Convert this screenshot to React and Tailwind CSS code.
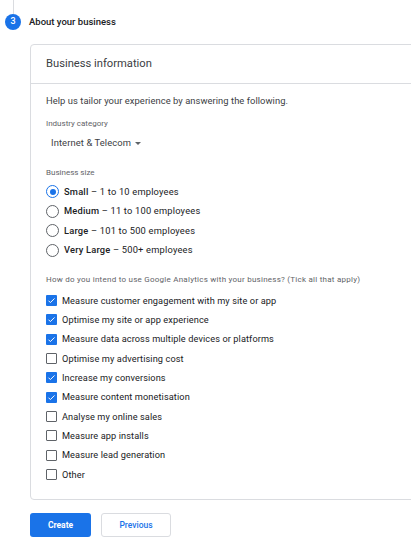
const sizes = [
  { name: "Small", desc: "1 to 10 employees", on: true },
  { name: "Medium", desc: "11 to 100 employees" },
  { name: "Large", desc: "101 to 500 employees" },
  { name: "Very Large", desc: "500+ employees" },
];

const uses = [
  { label: "Measure customer engagement with my site or app", on: true },
  { label: "Optimise my site or app experience", on: true },
  { label: "Measure data across multiple devices or platforms", on: true },
  { label: "Optimise my advertising cost" },
  { label: "Increase my conversions", on: true },
  { label: "Measure content monetisation", on: true },
  { label: "Analyse my online sales" },
  { label: "Measure app installs" },
  { label: "Measure lead generation" },
  { label: "Other" },
];

function Radio({ on }) {
  return (
    <span
      className={
        "w-[13px] h-[13px] rounded-full border-[1.5px] flex items-center justify-center shrink-0 " +
        (on ? "border-[#1a73e8]" : "border-[#5f6368]")
      }
    >
      {on && <span className="w-[6px] h-[6px] rounded-full bg-[#1a73e8]" />}
    </span>
  );
}

function Checkbox({ on }) {
  if (on) {
    return (
      <span className="w-[11px] h-[11px] rounded-[1px] bg-[#1a73e8] flex items-center justify-center shrink-0">
        <svg width="9" height="9" viewBox="0 0 24 24">
          <path d="M4 12.5l5 5L20 6.5" fill="none" stroke="#fff" strokeWidth="2.6" />
        </svg>
      </span>
    );
  }
  return <span className="w-[11px] h-[11px] rounded-[1px] border-[1.5px] border-[#5f6368] shrink-0" />;
}

export default function App() {
  return (
    <div className="w-[411px] h-[544px] overflow-hidden bg-white text-[#3c4043] font-['Roboto',sans-serif]">
      {/* step header */}
      <div className="relative h-[44px]">
        <div className="absolute left-[13px] top-0 w-px h-[14px] bg-[#dadce0]" />
        <div className="flex items-center pt-[14px] pl-[5px]">
          <span className="w-[16px] h-[16px] rounded-full bg-[#1a73e8] text-white text-[9px] font-medium flex items-center justify-center">
            3
          </span>
          <span className="ml-[8px] text-[9.5px] font-medium text-[#202124]">About your business</span>
        </div>
      </div>

      <div className="ml-[30px] w-[400px] border border-[#dadce0] rounded-[4px]">
        <div className="h-[39px] flex items-center pl-[15px] pt-[1px] border-b border-[#dadce0] text-[11.2px] text-[#3c4043]">
          Business information
        </div>

        <div className="pl-[15px] pt-[10px] pb-[15px]">
          <div className="h-[14px] leading-[14px] text-[9.4px] tracking-[0.05px]">
            Help us tailor your experience by answering the following.
          </div>

          <div className="mt-[10px] h-[12px] leading-[12px] text-[8px] text-[#5f6368]">Industry category</div>
          <div className="mt-[6px] h-[14px] flex items-center pl-[5px] text-[9.4px] tracking-[0.1px]">
            Internet &amp; Telecom
            <span className="ml-[4px] w-0 h-0 border-l-[3px] border-r-[3px] border-t-[3px] border-l-transparent border-r-transparent border-t-[#5f6368]" />
          </div>

          <div className="mt-[17px] h-[12px] leading-[12px] text-[8px] text-[#5f6368]">Business size</div>
          <div className="mt-[3px] flex flex-col">
            {sizes.map((s) => (
              <div key={s.name} className="h-[19.5px] flex items-center">
                <Radio on={s.on} />
                <span className="ml-[5px] text-[9.3px] tracking-[0.2px] text-[#202124]">
                  <span className="font-medium">{s.name}</span> – {s.desc}
                </span>
              </div>
            ))}
          </div>

          <div className="mt-[14px] h-[12px] leading-[12px] text-[8px] text-[#5f6368] tracking-[0.25px]">
            How do you intend to use Google Analytics with your business? (Tick all that apply)
          </div>
          <div className="mt-[5px] flex flex-col">
            {uses.map((u) => (
              <div key={u.label} className="h-[19.33px] flex items-center">
                <Checkbox on={u.on} />
                <span className="ml-[5px] text-[9.2px] tracking-[0.1px] text-[#202124]">{u.label}</span>
              </div>
            ))}
          </div>
        </div>
      </div>

      <div className="ml-[30px] mt-[13px] flex gap-[10px]">
        <button className="w-[61px] h-[24px] rounded-[3px] bg-[#1a73e8] text-white text-[8.5px] font-bold">
          Create
        </button>
        <button className="w-[70px] h-[24px] rounded-[3px] border border-[#dadce0] bg-white text-[#1a73e8] text-[8.5px] font-medium">
          Previous
        </button>
      </div>
    </div>
  );
}
